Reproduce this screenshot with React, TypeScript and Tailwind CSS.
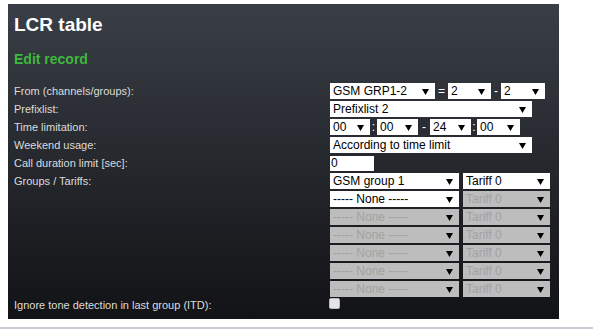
import React from "react";

const font = { fontFamily: '"Liberation Sans", Arial, sans-serif' };

function Arrow() {
    return (
        <svg width="7" height="7" viewBox="0 0 7 7" className="shrink-0">
            <polygon points="0,1 7,1 3.5,7" fill="#000" />
        </svg>
    );
}

function Select({ value, width, disabled }: { value: string; width: string; disabled?: boolean }) {
    return (
        <div
            className={`${width} h-[16px] flex items-center justify-between pl-[3px] pr-[6px] text-[12px] leading-[16px] whitespace-nowrap overflow-hidden ${
                disabled ? "bg-[#bdbdbd] text-[#a2a2a2]" : "bg-white text-black"
            }`}
        >
            <span>{value}</span>
            <Arrow />
        </div>
    );
}

function Sep({ ch, width }: { ch: string; width: string }) {
    return <span className={`${width} text-center text-white text-[12px] leading-[16px]`}>{ch}</span>;
}

function Row({ label, children }: { label?: string; children: React.ReactNode }) {
    return (
        <div className="flex h-[16px]">
            <div className="w-[316px] text-[11px] leading-[16px] text-[#dcdcdc] whitespace-nowrap">{label}</div>
            <div className="flex items-center">{children}</div>
        </div>
    );
}

const groups = [
    { group: "GSM group 1", groupOff: false, tariffOff: false },
    { group: "----- None -----", groupOff: false, tariffOff: true },
    { group: "----- None -----", groupOff: true, tariffOff: true },
    { group: "----- None -----", groupOff: true, tariffOff: true },
    { group: "----- None -----", groupOff: true, tariffOff: true },
    { group: "----- None -----", groupOff: true, tariffOff: true },
    { group: "----- None -----", groupOff: true, tariffOff: true },
];

export default function App() {
    return (
        <div className="w-[593px] h-[330px] bg-white overflow-hidden" style={font}>
            <div className="ml-[8px] mt-[4px] w-[551px] h-[315px] pl-[6px] pt-[10px] bg-gradient-to-b from-[#3a3f47] to-[#121316]">
                <h1 className="text-[19px] leading-[22px] font-bold text-white">LCR table</h1>
                <h2 className="mt-[15px] text-[14px] leading-[16px] font-bold text-[#3db83d]">Edit record</h2>

                <div className="mt-[16px] flex flex-col gap-[2px]">
                    <Row label="From (channels/groups):">
                        <Select value="GSM GRP1-2" width="w-[105px]" />
                        <Sep ch="=" width="w-[13px]" />
                        <Select value="2" width="w-[43px]" />
                        <Sep ch="-" width="w-[10px]" />
                        <Select value="2" width="w-[44px]" />
                    </Row>
                    <Row label="Prefixlist:">
                        <Select value="Prefixlist 2" width="w-[202px]" />
                    </Row>
                    <Row label="Time limitation:">
                        <Select value="00" width="w-[40px]" />
                        <Sep ch=":" width="w-[7px]" />
                        <Select value="00" width="w-[41px]" />
                        <Sep ch="-" width="w-[12px]" />
                        <Select value="24" width="w-[41px]" />
                        <Sep ch=":" width="w-[6px]" />
                        <Select value="00" width="w-[43px]" />
                    </Row>
                    <Row label="Weekend usage:">
                        <Select value="According to time limit" width="w-[202px]" />
                    </Row>
                    <Row label="Call duration limit [sec]:">
                        <div className="w-[44px] h-[15px] bg-white text-black text-[12px] leading-[15px] pl-[1px]">0</div>
                    </Row>
                    {groups.map((g, i) => (
                        <Row key={i} label={i === 0 ? "Groups / Tariffs:" : undefined}>
                            <Select value={g.group} width="w-[129px]" disabled={g.groupOff} />
                            <div className="w-[4px]" />
                            <Select value="Tariff 0" width="w-[87px]" disabled={g.tariffOff} />
                        </Row>
                    ))}
                    <div className="flex h-[16px] -mt-[2px]">
                        <div className="w-[315px] text-[11px] leading-[16px] text-[#dcdcdc] whitespace-nowrap">
                            Ignore tone detection in last group (ITD):
                        </div>
                        <div className="mt-[1px] w-[11px] h-[11px] rounded-[2px] bg-[#e6e6e6] border border-[#bbbbbb]" />
                    </div>
                </div>
            </div>
            <div className="mt-[8px] h-[2px] bg-[#c8ccd4]" />
        </div>
    );
}
